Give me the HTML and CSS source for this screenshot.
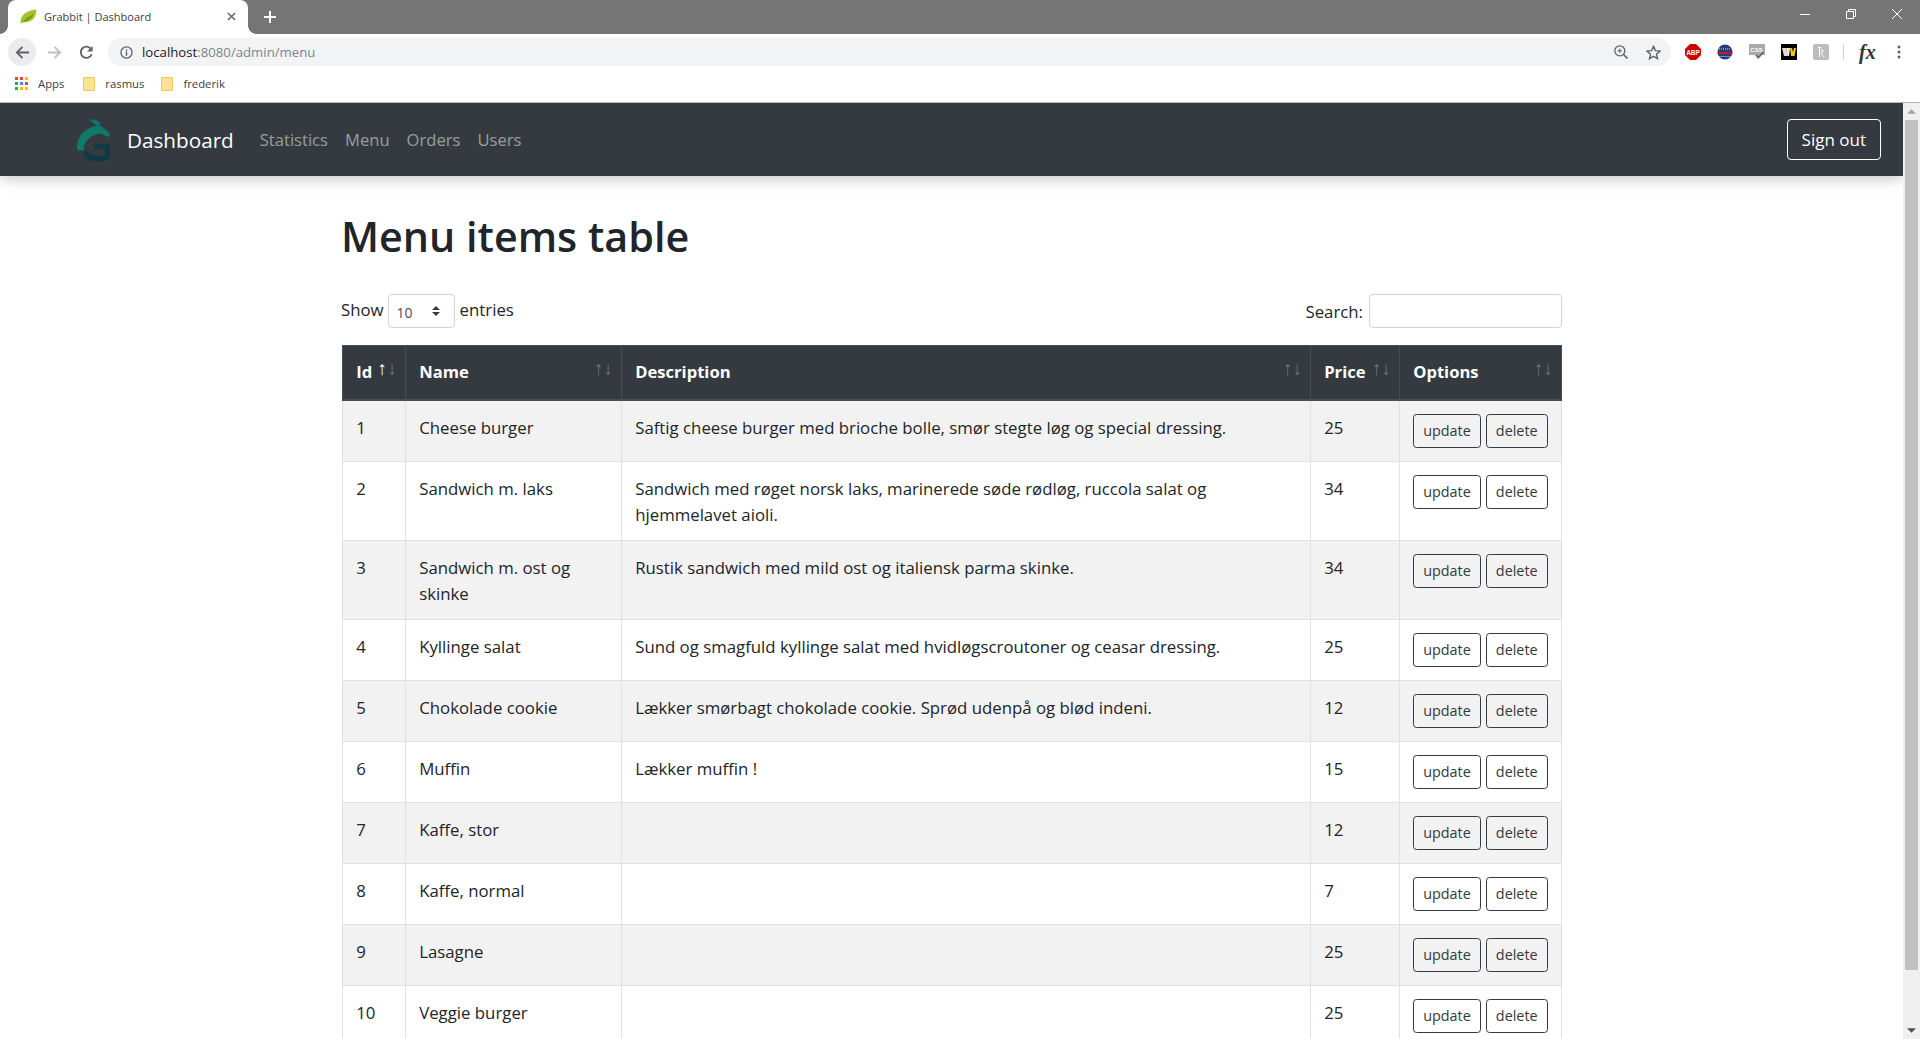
FILE: index.html
```html
<!DOCTYPE html>
<html lang="en">
<head>
  <meta charset="UTF-8">
  <title>Grabbit | Dashboard</title>
  <link rel="stylesheet" href="styles.css">
</head>
<body>
  <div class="tabstrip">
    <div class="tab">
      <svg class="tab-icon" viewBox="0 0 16 14"><path d="M0.5 13 C0.5 6 5 1.5 15.5 0.5 C15.5 8 11 13 4 12.5 C3 12.5 2 13 1 13.5 Z" fill="#a6c22c"/><path d="M2 12.5 C5 9 9 7 13 4.5 C11 9.5 7 11.5 2 12.5 Z" fill="#6f9a1e"/></svg>
      <span class="tab-title">Grabbit | Dashboard</span>
      <svg class="tab-close" viewBox="0 0 10 10"><path d="M1 1 L9 9 M9 1 L1 9" stroke="#5f6368" stroke-width="1.6"/></svg>
    </div>
    <svg class="new-tab" viewBox="0 0 12 12"><path d="M6 0 V12 M0 6 H12" stroke="#fff" stroke-width="2"/></svg>
    <div class="window-controls">
      <svg viewBox="0 0 10 10"><path d="M0 5.5 H10" stroke="#fff"/></svg>
      <svg viewBox="0 0 10 10"><path d="M0.5 2.5 H7.5 V9.5 H0.5 Z M2.5 2.5 V0.5 H9.5 V7.5 H7.5" stroke="#fff" fill="none"/></svg>
      <svg viewBox="0 0 10 10"><path d="M0 0 L10 10 M10 0 L0 10" stroke="#fff"/></svg>
    </div>
  </div>

  <div class="toolbar">
    <span class="nav-btn nav-btn-active"><svg viewBox="0 0 16 16"><path d="M15 8 H2 M8 2 L2 8 L8 14" stroke="#5f6368" stroke-width="2" fill="none"/></svg></span>
    <span class="nav-btn"><svg viewBox="0 0 16 16"><path d="M1 8 H14 M8 2 L14 8 L8 14" stroke="#bdc1c6" stroke-width="2" fill="none"/></svg></span>
    <span class="nav-btn"><svg viewBox="0 0 16 16"><path d="M13.5 10 A6 6 0 1 1 13 4.5" stroke="#5f6368" stroke-width="2" fill="none"/><path d="M14.5 1 V7 H8.5 Z" fill="#5f6368"/></svg></span>
    <div class="omnibox">
      <svg class="omni-info" viewBox="0 0 14 14"><circle cx="7" cy="7" r="6" stroke="#5f6368" stroke-width="1.4" fill="none"/><path d="M7 6 V10.5 M7 3.5 V5" stroke="#5f6368" stroke-width="1.5"/></svg>
      <span class="url"><span class="url-host">localhost</span>:8080/admin/menu</span>
      <svg class="omni-zoom" viewBox="0 0 14 14"><circle cx="5.8" cy="5.8" r="5" stroke="#5f6368" stroke-width="1.3" fill="none"/><path d="M9.5 9.5 L13.5 13.5" stroke="#5f6368" stroke-width="1.6"/><path d="M5.8 3.5 V8 M3.5 5.8 H8" stroke="#5f6368"/></svg>
      <svg class="omni-star" viewBox="0 0 16 16"><path d="M8 1.5 L10 6 L15 6.5 L11.2 9.8 L12.3 14.6 L8 12.1 L3.7 14.6 L4.8 9.8 L1 6.5 L6 6 Z" stroke="#5f6368" stroke-width="1.5" fill="none"/></svg>
    </div>
    <div class="extensions">
      <svg viewBox="0 0 16 16"><path d="M5 0 H11 L16 5 V11 L11 16 H5 L0 11 V5 Z" fill="#c00"/><text x="8" y="10.6" class="ext-abp">ABP</text></svg>
      <svg viewBox="0 0 16 16"><circle cx="8" cy="8" r="7.5" fill="#2a3a78"/><path d="M0.7 8 H15.3 V10 H0.7 Z" fill="#b32134"/><path d="M2 5 H14 M2.5 12.5 H13.5" stroke="#d8d8e8" stroke-dasharray="1 1"/></svg>
      <svg viewBox="0 0 16 16"><path d="M0 0 H16 V11 H11 L9 15 L6 11 H0 Z" fill="#a9a9a9"/><text x="7.5" y="7.6" class="ext-css">CSS</text><path d="M7 11 L9.5 13.5 L14.5 8" stroke="#666" stroke-width="1.6" fill="none"/></svg>
      <svg viewBox="0 0 16 16"><path d="M0 0 H16 V16 H0 Z" fill="#000"/><path d="M1 4 H5 L6.5 12 H3 Z" fill="#ddd"/><path d="M5 4 H9 L8 12 H6.5 Z" fill="#eee"/><path d="M9 4 H11 L12 8 L13 4 H15 L13.5 12 H10 Z" fill="#f5c518"/></svg>
      <svg viewBox="0 0 16 16"><rect width="16" height="16" rx="2" fill="#bdbdbd"/><path d="M5 3.5 H8 M6.5 3.5 V13 M6.5 7 C9 5 11 6 10 8 L8 9 L11 13" stroke="#fff" fill="none"/></svg>
    </div>
    <span class="toolbar-sep"></span>
    <span class="fx">fx</span>
    <svg class="menu-dots" viewBox="0 0 4 14"><circle cx="2" cy="2" r="1.5" fill="#5f6368"/><circle cx="2" cy="7" r="1.5" fill="#5f6368"/><circle cx="2" cy="12" r="1.5" fill="#5f6368"/></svg>
  </div>

  <div class="bookmarks">
    <span class="bookmark bookmark-apps">
      <svg class="apps-icon" viewBox="0 0 13 13">
        <rect width="3" height="3" fill="#ea4335"/><rect x="5" width="3" height="3" fill="#ea4335"/><rect x="10" width="3" height="3" fill="#fbbc05"/>
        <rect y="5" width="3" height="3" fill="#34a853"/><rect x="5" y="5" width="3" height="3" fill="#4285f4"/><rect x="10" y="5" width="3" height="3" fill="#ea4335"/>
        <rect y="10" width="3" height="3" fill="#34a853"/><rect x="5" y="10" width="3" height="3" fill="#fbbc05"/><rect x="10" y="10" width="3" height="3" fill="#fbbc05"/>
      </svg>Apps
    </span>
    <span class="bookmark"><span class="folder"></span>rasmus</span>
    <span class="bookmark"><span class="folder"></span>frederik</span>
  </div>

  <div class="viewport">
    <div class="page">
      <nav class="navbar">
        <svg class="brand-logo" viewBox="0 0 98 130">
          <path d="M62 22 C30 26 0 50 0 86 L2 96 L20 96 C18 72 40 48 70 46 L92 56 L98 50 C88 34 78 26 62 22 Z" fill="#0d7a6c"/>
          <path d="M62 24 L32 2 L52 8 L46 0 L72 16 L60 28 Z" fill="#0d7a6c"/>
          <path d="M24 102 C32 124 80 128 91 110 V85 H52" stroke="#0c3a45" stroke-width="15" fill="none"/>
        </svg>
        <a class="brand">Dashboard</a>
        <ul class="nav-links">
          <li>Statistics</li>
          <li>Menu</li>
          <li>Orders</li>
          <li>Users</li>
        </ul>
        <a class="sign-out">Sign out</a>
      </nav>

      <main class="content">
        <h1>Menu items table</h1>
        <div class="table-controls">
          <label class="length-control"><span class="length-text">Show</span>
            <span class="select-wrap">
              <select class="length-select"><option>10</option></select>
              <svg class="select-arrows" viewBox="0 0 8 10"><path d="M4 0 L8 4 H0 Z M4 10 L8 6 H0 Z" fill="#343a40"/></svg>
            </span>
            <span class="length-text">entries</span></label>
          <label class="search-control">Search: <input class="search-input" type="text"></label>
        </div>

        <table class="menu-table">
          <colgroup>
            <col class="col-id"><col class="col-name"><col class="col-desc"><col class="col-price"><col class="col-options">
          </colgroup>
          <thead>
            <tr>
              <th class="sorted">Id</th>
              <th>Name</th>
              <th>Description</th>
              <th>Price</th>
              <th>Options</th>
            </tr>
          </thead>
          <tbody>
            <tr><td>1</td><td>Cheese burger</td><td>Saftig cheese burger med brioche bolle, smør stegte løg og special dressing.</td><td>25</td><td class="options"><button class="btn">update</button><button class="btn">delete</button></td></tr>
            <tr><td>2</td><td>Sandwich m. laks</td><td>Sandwich med røget norsk laks, marinerede søde rødløg, ruccola salat og hjemmelavet aioli.</td><td>34</td><td class="options"><button class="btn">update</button><button class="btn">delete</button></td></tr>
            <tr><td>3</td><td>Sandwich m. ost og skinke</td><td>Rustik sandwich med mild ost og italiensk parma skinke.</td><td>34</td><td class="options"><button class="btn">update</button><button class="btn">delete</button></td></tr>
            <tr><td>4</td><td>Kyllinge salat</td><td>Sund og smagfuld kyllinge salat med hvidløgscroutoner og ceasar dressing.</td><td>25</td><td class="options"><button class="btn">update</button><button class="btn">delete</button></td></tr>
            <tr><td>5</td><td>Chokolade cookie</td><td>Lækker smørbagt chokolade cookie. Sprød udenpå og blød indeni.</td><td>12</td><td class="options"><button class="btn">update</button><button class="btn">delete</button></td></tr>
            <tr><td>6</td><td>Muffin</td><td>Lækker muffin !</td><td>15</td><td class="options"><button class="btn">update</button><button class="btn">delete</button></td></tr>
            <tr><td>7</td><td>Kaffe, stor</td><td></td><td>12</td><td class="options"><button class="btn">update</button><button class="btn">delete</button></td></tr>
            <tr><td>8</td><td>Kaffe, normal</td><td></td><td>7</td><td class="options"><button class="btn">update</button><button class="btn">delete</button></td></tr>
            <tr><td>9</td><td>Lasagne</td><td></td><td>25</td><td class="options"><button class="btn">update</button><button class="btn">delete</button></td></tr>
            <tr><td>10</td><td>Veggie burger</td><td></td><td>25</td><td class="options"><button class="btn">update</button><button class="btn">delete</button></td></tr>
          </tbody>
        </table>
      </main>
    </div>

    <div class="scrollbar">
      <svg class="scroll-arrow" viewBox="0 0 10 5"><path d="M5 0 L10 5 H0 Z" fill="#a3a3a3"/></svg>
      <div class="scroll-track"><div class="scroll-thumb"></div></div>
      <svg class="scroll-arrow" viewBox="0 0 10 5"><path d="M0 0 H10 L5 5 Z" fill="#505050"/></svg>
    </div>
  </div>
</body>
</html>
```

FILE: styles.css
```css
* {
  box-sizing: border-box;
}
html, body {
  height: 100%;
}
body {
  margin: 0;
  display: flex;
  flex-direction: column;
  overflow: hidden;
  font-family: "Open Sans", sans-serif;
  color: #212529;
  background-color: #fff;
}

/* browser chrome */
.tabstrip {
  height: 34px;
  flex: none;
  display: flex;
  align-items: flex-end;
  padding-left: 8px;
  background-color: #757575;
}
.tab {
  position: relative;
  width: 240px;
  height: 34px;
  display: flex;
  align-items: center;
  padding: 0 12px 2px;
  background-color: #fff;
  border-radius: 8px 8px 0 0;
}
.tab::before, .tab::after {
  content: "";
  position: absolute;
  bottom: 0;
  width: 8px;
  height: 8px;
  background: radial-gradient(circle at 0 0, #757575 7.5px, #fff 8px);
}
.tab::before {
  left: -8px;
}
.tab::after {
  right: -8px;
  background: radial-gradient(circle at 100% 0, #757575 7.5px, #fff 8px);
}
.tab-icon {
  width: 17px;
  height: 15px;
}
.tab-title {
  margin-left: 7px;
  font-size: 11px;
  color: #3c4043;
  white-space: nowrap;
}
.tab-close {
  width: 9px;
  height: 9px;
  margin-left: auto;
}
.new-tab {
  width: 12px;
  height: 12px;
  margin: 0 0 11px 16px;
}
.window-controls {
  margin-left: auto;
  display: flex;
  gap: 36px;
  padding-right: 18px;
  align-self: flex-start;
  padding-top: 9px;
}
.window-controls svg {
  width: 10px;
  height: 10px;
}

.toolbar {
  height: 34px;
  flex: none;
  display: flex;
  align-items: center;
  padding: 2px 0 0 8px;
  background-color: #fff;
}
.nav-btn {
  width: 28px;
  height: 28px;
  margin-right: 4px;
  display: flex;
  align-items: center;
  justify-content: center;
  border-radius: 50%;
}
.nav-btn-active {
  background-color: #ececec;
}
.nav-btn svg {
  width: 15px;
  height: 15px;
}
.omnibox {
  width: 1563px;
  height: 28px;
  margin-left: 4px;
  display: flex;
  align-items: center;
  padding: 0 10px 0 12px;
  background-color: #f1f3f4;
  border-radius: 14px;
}
.omni-info {
  width: 13px;
  height: 13px;
}
.url {
  margin-left: 9px;
  font-size: 13.2px;
  color: #80868b;
}
.url-host {
  color: #202124;
}
.omni-zoom {
  width: 14px;
  height: 14px;
  margin-left: auto;
}
.omni-star {
  width: 15px;
  height: 15px;
  margin-left: 18px;
}
.extensions {
  display: flex;
  gap: 16px;
  margin-left: 14px;
}
.extensions svg {
  width: 16px;
  height: 16px;
}
.extensions text {
  font-family: "Liberation Sans", sans-serif;
  font-weight: 700;
  text-anchor: middle;
}
.ext-abp {
  font-size: 6.5px;
  fill: #fff;
}
.ext-css {
  font-size: 6px;
  fill: #fff;
}
.toolbar-sep {
  width: 1px;
  height: 16px;
  margin-left: 14px;
  background-color: #d0d0d0;
}
.fx {
  margin-left: 15px;
  font-family: "Liberation Serif", serif;
  font-size: 20px;
  font-weight: 700;
  font-style: italic;
  color: #333;
}
.menu-dots {
  width: 4px;
  height: 14px;
  margin-left: 21px;
}

.bookmarks {
  height: 35px;
  flex: none;
  display: flex;
  align-items: center;
  gap: 17px;
  padding: 0 0 3px 15px;
  background-color: #fff;
  border-bottom: 1px solid #b5b5b5;
  font-size: 11.3px;
  color: #3c4043;
}
.bookmark {
  display: flex;
  align-items: center;
}
.bookmark-apps {
  margin-right: 2px;
}
.apps-icon {
  width: 13px;
  height: 13px;
  margin-right: 10px;
}
.folder {
  width: 12px;
  height: 14px;
  margin-right: 10px;
  background-color: #fde293;
  border: 1px solid #f0c95e;
  border-radius: 1px;
}

/* page inside the browser window */
.viewport {
  flex: 1;
  min-height: 0;
  display: flex;
}
.page {
  flex: 1;
  min-width: 0;
  overflow: hidden;
}
.navbar {
  height: 73px;
  display: flex;
  align-items: center;
  padding: 0 22px 0 77px;
  background-color: #343a40;
  box-shadow: 0 2px 14px rgba(0, 0, 0, 0.25);
}
.brand-logo {
  width: 33px;
  height: 44px;
}
.brand {
  margin-left: 17px;
  font-size: 20.7px;
  color: #fff;
}
.nav-links {
  display: flex;
  gap: 17px;
  margin: 0 0 0 26px;
  padding: 0;
  list-style: none;
  font-size: 16.6px;
  color: rgba(255, 255, 255, 0.5);
}
.sign-out {
  margin-left: auto;
  padding: 8px 14px;
  font-size: 17px;
  color: #fff;
  border: 1px solid #fff;
  border-radius: 4px;
}

.content {
  width: 1221px;
  margin-left: 341px;
  font-size: 16.8px;
}
h1 {
  margin: 0;
  padding-top: 33px;
  font-size: 41.3px;
  font-weight: 600;
  line-height: 54px;
}
.table-controls {
  display: flex;
  justify-content: space-between;
  margin-top: 31px;
}
.length-control, .search-control {
  display: flex;
  align-items: center;
  height: 34px;
}
.length-text {
  margin-top: -4px;
}
.select-wrap {
  position: relative;
  margin: 0 5px 0 4px;
}
.length-select {
  display: block;
  width: 67px;
  height: 34px;
  padding: 2px 0 0 8px;
  font-family: inherit;
  font-size: 14px;
  color: #495057;
  background-color: #fff;
  border: 1px solid #ced4da;
  border-radius: 4px;
  appearance: none;
}
.select-arrows {
  position: absolute;
  top: 12px;
  right: 15px;
  width: 8px;
  height: 10px;
}
.search-control {
  gap: 6px;
}
.search-input {
  width: 193px;
  height: 34px;
  background-color: #fff;
  border: 1px solid #ced4da;
  border-radius: 4px;
}

.menu-table {
  width: 1219px;
  margin: 17px 0 0 1px;
  table-layout: fixed;
  border-collapse: collapse;
}
.col-id { width: 63px; }
.col-name { width: 216px; }
.col-desc { width: 689px; }
.col-price { width: 89px; }
.col-options { width: 162px; }
th, td {
  padding: 14px 13.2px 12px;
  text-align: left;
  vertical-align: top;
  line-height: 26px;
}
th {
  position: relative;
  height: 54px;
  padding-top: 13px;
  font-size: 16.6px;
  font-weight: 700;
  color: #fff;
  background-color: #343a40;
  border: 1px solid #454d55;
  border-bottom-width: 2px;
}
th::after {
  content: "\2191\2193";
  position: absolute;
  top: 10px;
  right: 8px;
  font-family: "Liberation Sans", sans-serif;
  font-size: 19px;
  font-weight: 400;
  color: rgba(255, 255, 255, 0.3);
}
th.sorted::after {
  content: "\2191";
  right: 18px;
  color: #fff;
}
th.sorted::before {
  content: "\2193";
  position: absolute;
  top: 10px;
  right: 8px;
  font-family: "Liberation Sans", sans-serif;
  font-size: 19px;
  font-weight: 400;
  color: rgba(255, 255, 255, 0.3);
}
td {
  border: 1px solid #dee2e6;
}
tbody tr:nth-child(odd) {
  background-color: #f2f2f2;
}
.options {
  padding-top: 13px;
  padding-bottom: 13px;
  white-space: nowrap;
}
.btn {
  height: 34px;
  padding: 0 9px;
  font-family: inherit;
  font-size: 14.4px;
  color: #343a40;
  background-color: transparent;
  border: 1px solid #343a40;
  border-radius: 3.5px;
}
.btn + .btn {
  margin-left: 5px;
}

/* fake scrollbar, the page is cut off at the window edge */
.scrollbar {
  width: 17px;
  flex: none;
  display: flex;
  flex-direction: column;
  align-items: center;
  background-color: #f0f0f0;
}
.scroll-arrow {
  width: 9px;
  height: 5px;
  margin: 6px 0;
}
.scroll-track {
  flex: 1;
  width: 100%;
  padding: 0 2px;
}
.scroll-thumb {
  height: 850px;
  background-color: #c1c1c1;
}
```
